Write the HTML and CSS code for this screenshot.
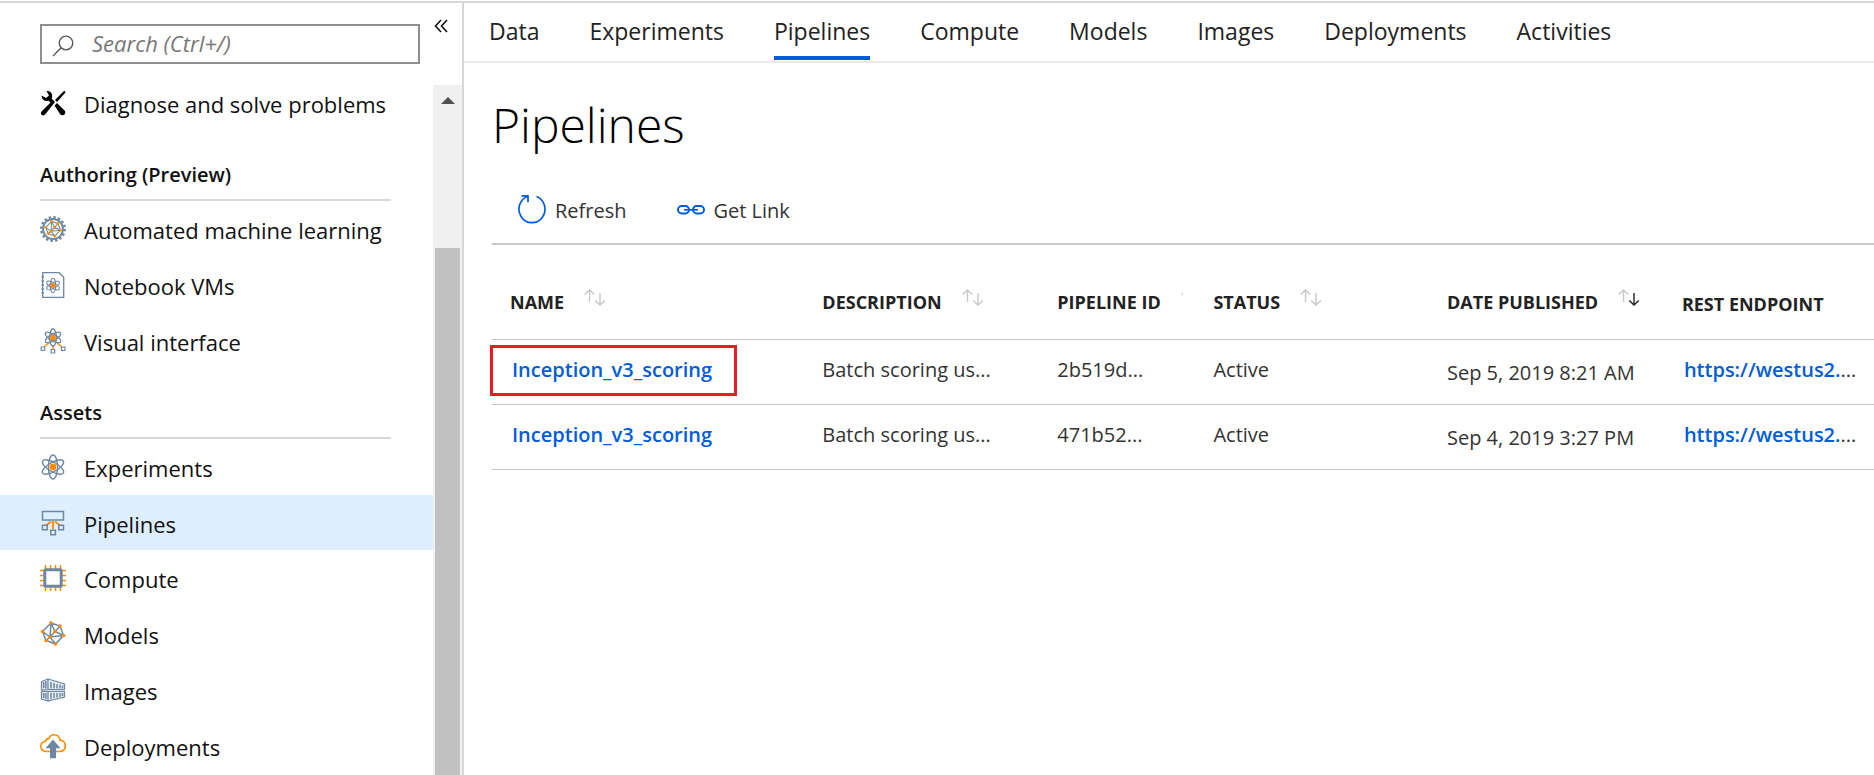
FILE: index.html
```html
<!DOCTYPE html>
<html lang="en">
<head>
<meta charset="utf-8">
<meta name="viewport" content="width=device-width, initial-scale=1">
<title>Pipelines</title>
<link rel="stylesheet" href="styles.css">
</head>
<body>
<svg class="defs" aria-hidden="true">
  <defs>
    <g id="atom" fill="none">
      <ellipse cx="13" cy="13" rx="4.6" ry="12"/>
      <ellipse cx="13" cy="13" rx="4.6" ry="12" transform="rotate(60 13 13)"/>
      <ellipse cx="13" cy="13" rx="4.6" ry="12" transform="rotate(-60 13 13)"/>
    </g>
    <path id="mesh-lines" d="M11 2 20 5 23.5 14.500 15.500 23 6 19.500 2.500 10.500ZM11 2 10 16 15 10.500ZM20 5 15 10.500 23.500 14.500 10 16 6 19.500M2.500 10.500 10 16 15.500 23" fill="none" stroke="#6d87a3" stroke-width="1.500"/>
    <path id="mesh-dots" d="M11 2h0M20 5h0M23.500 14.500h0M15.500 23h0M6 19.500h0M2.500 10.500h0M10 16h0M15 10.500h0" fill="none" stroke="#ff8c00" stroke-linecap="round"/>
    <path id="sort-up" d="M5.500 13V1M.7 5.500 5.500 1l4.800 4.500" fill="none"/>
    <path id="sort-down" d="M16 4v12M11.200 11.500 16 16l4.800-4.500" fill="none"/>
  </defs>
</svg>
<div class="app">
  <aside class="sidebar">
    <div class="sidebar-top">
      <label class="search">
        <svg class="search-icon" viewBox="0 0 22 22" aria-hidden="true"><circle cx="14" cy="8" r="6.800"/><path d="M9.200 12.800 1 21"/></svg>
        <input class="search-input" type="text" placeholder="Search (Ctrl+/)" aria-label="Search">
      </label>
      <button class="collapse" type="button" aria-label="Collapse menu">
        <svg viewBox="0 0 14 14" aria-hidden="true"><path d="M7 1 1.500 7 7 13M13 1 7.500 7 13 13"/></svg>
      </button>
    </div>
    <div class="sidebar-body">
      <nav class="menu">
        <a class="menu-item" href="#">
          <svg class="icon" viewBox="0 0 26 26" aria-hidden="true">
            <path d="M25.500 1.500 24 1 15 10l2 2 8-9Z"/>
            <path d="M14.500 15.500 17 13l8 8q1 3-1.500 4-2 .8-3.500-1Z"/>
            <path d="M1.500 5.500 6 8l3-2.500L6.500 1Q11 .5 12 4.500q.5 2-.3 4L15 12 5.500 24q-1.800 2.500-4 .800-1.500-1.800.5-3.800L10.500 12.500 8.500 10.800Q2 12 1.500 5.500Z"/>
          </svg>
          <span>Diagnose and solve problems</span>
        </a>
        <h2 class="menu-heading">Authoring (Preview)</h2>
        <a class="menu-item" href="#">
          <svg class="icon" viewBox="0 0 26 26" aria-hidden="true">
            <circle cx="13" cy="13" r="11.800" fill="none" stroke="#6d87a3" stroke-width="2.400" stroke-dasharray="2.400 2.233"/>
            <circle cx="13" cy="13" r="10" fill="none" stroke="#6d87a3" stroke-width="1.800"/>
            <use href="#mesh-lines" transform="translate(4 4) scale(.7)"/>
            <use href="#mesh-dots" transform="translate(4 4) scale(.7)" stroke-width="4"/>
          </svg>
          <span>Automated machine learning</span>
        </a>
        <a class="menu-item" href="#">
          <svg class="icon" viewBox="0 0 26 26" aria-hidden="true">
            <path d="M2.700.7H19l4.700 4.500v20.100h-21ZM1.500 5h2.500M1.500 9h2.500M1.500 13h2.500M1.500 17h2.500M1.500 21h2.500" fill="none" stroke="#6d87a3" stroke-width="1.300"/>
            <use href="#atom" transform="translate(5.200 5.700) scale(.6)" stroke="#6d87a3" stroke-width="1.800"/>
            <circle cx="13" cy="13.500" r="2.500" fill="#ff8c00"/>
          </svg>
          <span>Notebook VMs</span>
        </a>
        <a class="menu-item" href="#">
          <svg class="icon" viewBox="0 0 26 26" aria-hidden="true">
            <path d="m9 15-5 4M13 17v4M17 15l5 4" fill="none" stroke="#ff8c00" stroke-width="1.300"/>
            <use href="#atom" transform="translate(3.500 0) scale(.73)" stroke="#6d87a3" stroke-width="1.800"/>
            <circle cx="13" cy="9.500" r="2.900" fill="#ff8c00"/>
            <path d="M1.200 19h3.500v3.500H1.200ZM11.200 21.500h3.500V25h-3.500ZM21.500 19H25v3.500h-3.500Z" fill="#fff" stroke="#6d87a3" stroke-width="1.200"/>
          </svg>
          <span>Visual interface</span>
        </a>
        <h2 class="menu-heading">Assets</h2>
        <a class="menu-item" href="#">
          <svg class="icon" viewBox="0 0 26 26" aria-hidden="true">
            <use href="#atom" stroke="#6d87a3" stroke-width="1.400"/>
            <circle cx="13" cy="13" r="3.400" fill="#ff8c00"/>
          </svg>
          <span>Experiments</span>
        </a>
        <a class="menu-item menu-item-selected" href="#" aria-current="page">
          <svg class="icon" viewBox="0 0 26 26" aria-hidden="true">
            <path d="m11 11.500-5 4M13 11v8M15 11.500l5 4" fill="none" stroke="#ff8c00" stroke-width="1.800"/>
            <path d="M2.500 1.500h21v8.500h-21ZM2.500 15.300h4.700v4.500H2.500ZM10.700 20.200h4.700v4.500h-4.700ZM18.800 15.300h4.700v4.500h-4.700Z" fill="#ddefff" stroke="#6d87a3" stroke-width="1.500"/>
          </svg>
          <span>Pipelines</span>
        </a>
        <a class="menu-item" href="#">
          <svg class="icon" viewBox="0 0 26 26" aria-hidden="true">
            <path d="M5.500 0v26M10.500 0v26M15.500 0v26M20.500 0v26M0 5.500h26M0 10.500h26M0 15.500h26M0 20.500h26" stroke="#ff8c00" stroke-width="1.500"/>
            <rect x="4.800" y="4.800" width="16.400" height="16.400" rx="1" fill="#fff" stroke="#6d87a3" stroke-width="3"/>
          </svg>
          <span>Compute</span>
        </a>
        <a class="menu-item" href="#">
          <svg class="icon" viewBox="0 0 26 26" aria-hidden="true"><use href="#mesh-lines"/><use href="#mesh-dots" stroke-width="3.600"/></svg>
          <span>Models</span>
        </a>
        <a class="menu-item" href="#">
          <svg class="icon" viewBox="0 0 26 26" aria-hidden="true">
            <path d="M1.500 4.500 8 2v10.500l-6.500.3ZM8 2l16.500 5v5.500H8ZM1.500 14.300H8V24l-6.500-2ZM8 14.300h16.500V20L8 24Z" fill="#e8edf2" stroke="#6d87a3" stroke-width="1.200"/>
            <path d="M3.700 5v6M5.900 4v7.500M11 5v6.500M14 6v5.500M17 7v4.500M20 7.500v4M22.500 8.500v3M3.700 16v5M5.900 16v6M11 16v6M14 16v5M17 16v4.500M20 16v4M22.500 16v3" stroke="#6d87a3" stroke-width="1.500"/>
          </svg>
          <span>Images</span>
        </a>
        <a class="menu-item" href="#">
          <svg class="icon" viewBox="0 0 26 26" aria-hidden="true">
            <path d="M6.500 18.500C2.500 18.500.8 16 .8 13.300c0-2.800 2-4.700 4.700-4.800.3-2 1.700-3 3.300-2.800C9.800 3 11.500 1.700 14 1.700c3 0 5.500 2 6 5.500 3.500.3 5.300 2.800 5.300 5.500 0 3.200-2.200 5.600-5.800 5.800Z" fill="none" stroke="#ff8c00" stroke-width="1.600"/>
            <path d="m13 6.500 7.500 8.800H16V25.300h-6V15.300H5.500Z" fill="#6d87a3"/>
          </svg>
          <span>Deployments</span>
        </a>
      </nav>
      <div class="scrollbar" aria-hidden="true">
        <span class="scroll-arrow"></span>
        <span class="scroll-thumb"></span>
      </div>
    </div>
  </aside>
  <main class="main">
    <nav class="tabs">
      <a class="tab" href="#">Data</a>
      <a class="tab" href="#">Experiments</a>
      <a class="tab tab-active" href="#" aria-current="page">Pipelines</a>
      <a class="tab" href="#">Compute</a>
      <a class="tab" href="#">Models</a>
      <a class="tab" href="#">Images</a>
      <a class="tab" href="#">Deployments</a>
      <a class="tab" href="#">Activities</a>
    </nav>
    <section class="content">
      <h1 class="title">Pipelines</h1>
      <div class="toolbar">
        <button class="tool" type="button">
          <svg class="tool-icon" viewBox="0 0 28 30" aria-hidden="true"><path d="M18.500 2.500A13 13.500 0 1 1 10 2.300M3.500 1.800h6.500v6.500" stroke-width="1.700"/></svg>
          <span>Refresh</span>
        </button>
        <button class="tool" type="button">
          <svg class="tool-icon" viewBox="0 0 28 30" aria-hidden="true"><rect x="1" y="12" width="11" height="7.500" rx="3.700" stroke-width="2"/><rect x="16" y="12" width="11" height="7.500" rx="3.700" stroke-width="2"/><path d="M7 15.800h14" stroke-width="1.700"/></svg>
          <span>Get Link</span>
        </button>
      </div>
      <table class="grid">
        <colgroup><col class="col-name"><col class="col-description"><col class="col-id"><col class="col-status"><col class="col-date"><col class="col-endpoint"></colgroup>
        <thead>
          <tr>
            <th scope="col"><div class="head">NAME <svg class="sort" viewBox="0 0 22 17" aria-hidden="true"><use href="#sort-up"/><use href="#sort-down"/></svg></div></th>
            <th scope="col"><div class="head">DESCRIPTION <svg class="sort" viewBox="0 0 22 17" aria-hidden="true"><use href="#sort-up"/><use href="#sort-down"/></svg></div></th>
            <th scope="col"><div class="head">PIPELINE ID <svg class="sort" viewBox="0 0 22 17" aria-hidden="true"><use href="#sort-up"/><use href="#sort-down"/></svg></div></th>
            <th scope="col"><div class="head">STATUS <svg class="sort" viewBox="0 0 22 17" aria-hidden="true"><use href="#sort-up"/><use href="#sort-down"/></svg></div></th>
            <th scope="col" aria-sort="descending"><div class="head">DATE PUBLISHED <svg class="sort" viewBox="0 0 22 17" aria-hidden="true"><use href="#sort-up"/><use class="sort-on" href="#sort-down"/></svg></div></th>
            <th scope="col"><div class="head head-plain">REST ENDPOINT</div></th>
          </tr>
        </thead>
        <tbody>
          <tr>
            <td class="cell-marked"><a class="link" href="#">Inception_v3_scoring</a></td>
            <td>Batch scoring us...</td>
            <td>2b519d...</td>
            <td>Active</td>
            <td class="cell-date">Sep 5, 2019 8:21 AM</td>
            <td><a class="link" href="#">https://westus2.</a>...</td>
          </tr>
          <tr>
            <td><a class="link" href="#">Inception_v3_scoring</a></td>
            <td>Batch scoring us...</td>
            <td>471b52...</td>
            <td>Active</td>
            <td class="cell-date">Sep 4, 2019 3:27 PM</td>
            <td><a class="link" href="#">https://westus2.</a>...</td>
          </tr>
        </tbody>
      </table>
    </section>
  </main>
</div>
</body>
</html>
```
FILE: styles.css
```css
*, *::before { box-sizing: border-box; }

body {
  margin: 0;
  background: #fff;
  color: #111;
  font-family: "Open Sans", "Noto Sans", sans-serif;
  font-size: 22px;
}

a { color: inherit; text-decoration: none; }

button {
  border: 0;
  padding: 0;
  background: none;
  color: inherit;
  font: inherit;
}

.defs { position: absolute; width: 0; height: 0; }

.app {
  display: flex;
  height: 100vh;
  padding-top: 1px;
  overflow: hidden;
}

/* Sidebar */
.sidebar {
  display: flex;
  flex: none;
  flex-direction: column;
  width: 464px;
  border-top: 2px solid #d8d8d8;
  border-right: 2px solid #d8d8d8;
}

.sidebar-top {
  display: flex;
  align-items: flex-start;
  gap: 14px;
  height: 82px;
  flex: none;
  padding: 21px 14px 0 40px;
}

.search {
  display: flex;
  align-items: center;
  flex: 1;
  height: 40px;
  padding-left: 10px;
  border: 2px solid #8e8e8e;
}

.search-icon {
  width: 22px;
  height: 22px;
  margin-top: 4px;
  fill: none;
  stroke: #555;
  stroke-width: 1.3;
}

.search-input {
  flex: 1;
  min-width: 0;
  margin-left: 18px;
  padding: 0 0 2px;
  border: 0;
  outline: 0;
  background: none;
  font: italic 22px "Open Sans", "Noto Sans", sans-serif;
}

.search-input::placeholder { color: #777; opacity: 1; }

.collapse {
  width: 14px;
  height: 14px;
  margin-top: -5px;
}

.collapse svg {
  display: block;
  fill: none;
  stroke: #111;
  stroke-width: 1.6;
}

.sidebar-body {
  display: flex;
  flex: 1;
  min-height: 0;
}

.menu {
  flex: 1;
  margin-top: -10px;
}

.menu-item {
  display: flex;
  align-items: center;
  gap: 18px;
  height: 56px;
  padding-left: 40px;
}

.menu-item span { padding-top: 2px; line-height: 30px; }

.menu-item-selected { height: 55px; background: #ddefff; }

.icon { flex: none; width: 26px; height: 26px; }

.menu-heading {
  height: 70px;
  margin: 0 42px 0 40px;
  padding-top: 29px;
  border-bottom: 2px solid #d8d8d8;
  font-size: 20px;
  font-weight: 600;
  line-height: 30px;
}

.scrollbar {
  display: flex;
  flex-direction: column;
  width: 29px;
  padding: 12px 2px 0;
  background: #f0f0f0;
}

.scroll-arrow {
  align-self: center;
  border: 7px solid transparent;
  border-top: 0;
  border-bottom-color: #505050;
}

.scroll-thumb {
  flex: 1;
  margin-top: 144px;
  background: #c1c1c1;
}

/* Main area */
.main {
  flex: 1;
  min-width: 0;
  border-top: 2px solid #d8d8d8;
}

.tabs {
  display: flex;
  gap: 50px;
  height: 60px;
  padding: 0 25px;
  border-bottom: 2px solid #eaeaea;
  color: #222;
  font-size: 23px;
}

.tab {
  height: 57px;
  padding-top: 10px;
  line-height: 36px;
}

.tab-active { border-bottom: 4px solid #015cda; }

.content { padding: 22px 0 0 28px; }

.title {
  margin: 0;
  color: #000;
  font-size: 48px;
  font-weight: 300;
  line-height: 80px;
}

.toolbar {
  display: flex;
  align-items: center;
  gap: 50px;
  height: 80px;
  padding: 10px 26px 0;
  border-bottom: 2px solid #c8c8c8;
}

.tool {
  display: flex;
  align-items: center;
  gap: 9px;
  color: #333;
  font-size: 20px;
}

.tool span { padding-top: 2px; }

.tool-icon {
  width: 28px;
  height: 30px;
  fill: none;
  stroke: #015cda;
}

.grid {
  width: 100%;
  table-layout: fixed;
  border-collapse: collapse;
  color: #333;
  font-size: 20px;
}

.col-name { width: 22.6%; }
.col-description { width: 17%; }
.col-id { width: 11.3%; }
.col-status { width: 16.9%; }
.col-date { width: 17%; }
.col-endpoint { width: 15.2%; }

.grid th {
  height: 94px;
  padding: 20px 12px 0 18px;
  border-bottom: 1px solid #c4c4c4;
  color: #222;
  font-size: 18px;
  text-align: left;
}

.head {
  display: flex;
  align-items: center;
  gap: 20px;
  overflow: hidden;
  line-height: 30px;
  white-space: nowrap;
}

.head-plain { padding-top: 4px; }

.sort {
  flex: none;
  width: 22px;
  height: 17px;
  margin-bottom: 8px;
  stroke: #c8c8c8;
  stroke-width: 1.4;
}

.sort-on { stroke: #222; }

.grid td {
  position: relative;
  height: 65px;
  padding: 0 0 4px 18px;
  border-bottom: 1px solid #c4c4c4;
  line-height: 30px;
  white-space: nowrap;
}

.grid .cell-date { padding-top: 2px; padding-bottom: 0; }

.link {
  padding-left: 2px;
  color: #015cda;
  font-weight: 600;
}

/* Highlight frame around the first pipeline */
.cell-marked::before {
  content: "";
  position: absolute;
  top: 5px;
  left: -2px;
  width: 247px;
  height: 51px;
  border: 3px solid #ed1c24;
  pointer-events: none;
}
```
